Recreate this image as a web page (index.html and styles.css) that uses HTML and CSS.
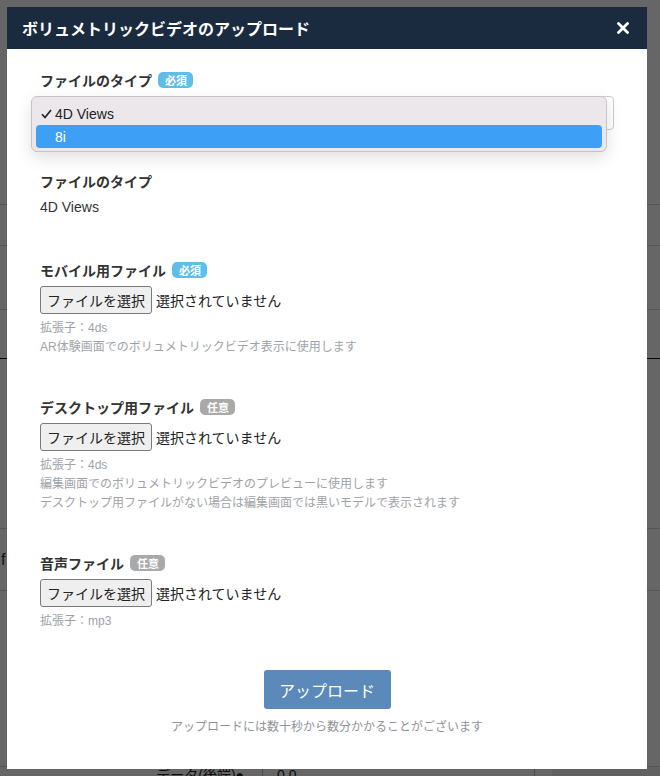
FILE: index.html
```html
<!DOCTYPE html>
<html lang="ja">
<head>
<meta charset="utf-8">
<title>ボリュメトリックビデオのアップロード</title>
<link rel="stylesheet" href="styles.css">
</head>
<body>
<div class="page">
  <div class="row r1"></div>
  <div class="row r2"></div>
  <div class="row r3"></div>
  <div class="row r4"></div>
  <div class="row r5"></div>
  <div class="row r6"><span class="cut">f</span></div>
  <div class="row r7"></div>
  <div class="row r8">
    <span class="cell-label">データ(後端)●</span>
    <span class="cell-value">0.0</span>
    <span class="cell-side"></span>
  </div>
</div>
<div class="backdrop"></div>

<div class="modal">
  <div class="modal-header">
    <h1 class="modal-title">ボリュメトリックビデオのアップロード</h1>
    <button class="close" type="button" aria-label="閉じる">
      <svg width="12" height="12" viewBox="0 0 12 12"><path d="M1.5 1.5L10.5 10.5M10.5 1.5L1.5 10.5" stroke="#fff" stroke-width="2.8" stroke-linecap="round"/></svg>
    </button>
  </div>

  <div class="modal-body">
    <div class="group g-select">
      <div class="label">ファイルのタイプ <span class="badge req">必須</span></div>
      <div class="select">
        <span class="select-value" aria-hidden="true"></span>
        <svg class="chev" width="8" height="12" viewBox="0 0 8 12"><path d="M1 4.5L4 1.5L7 4.5M1 7.5L4 10.5L7 7.5" fill="none" stroke="#222" stroke-width="1.6"/></svg>
      </div>
      <div class="popup">
        <div class="opt checked">
          <svg class="tick" width="11" height="10" viewBox="0 0 11 10"><path d="M1 5.2L4 8.5L10 1" fill="none" stroke="#222" stroke-width="1.7"/></svg>
          <span>4D Views</span>
        </div>
        <div class="opt hl"><span>8i</span></div>
      </div>
    </div>

    <div class="group g-type">
      <div class="label">ファイルのタイプ</div>
      <div class="value">4D Views</div>
    </div>

    <div class="group">
      <div class="label">モバイル用ファイル <span class="badge req">必須</span></div>
      <div class="file"><span class="file-btn">ファイルを選択</span><span class="file-name">選択されていません</span></div>
      <p class="hint">拡張子：4ds<br>AR体験画面でのボリュメトリックビデオ表示に使用します</p>
    </div>

    <div class="group">
      <div class="label">デスクトップ用ファイル <span class="badge opt-badge">任意</span></div>
      <div class="file"><span class="file-btn">ファイルを選択</span><span class="file-name">選択されていません</span></div>
      <p class="hint">拡張子：4ds<br>編集画面でのボリュメトリックビデオのプレビューに使用します<br>デスクトップ用ファイルがない場合は編集画面では黒いモデルで表示されます</p>
    </div>

    <div class="group">
      <div class="label">音声ファイル <span class="badge opt-badge">任意</span></div>
      <div class="file"><span class="file-btn">ファイルを選択</span><span class="file-name">選択されていません</span></div>
      <p class="hint">拡張子：mp3</p>
    </div>

    <div class="actions">
      <button class="upload" type="button">アップロード</button>
      <p class="note">アップロードには数十秒から数分かかることがございます</p>
    </div>
  </div>
</div>
</body>
</html>
```

FILE: styles.css
```css
* { box-sizing: border-box; }

html, body {
  margin: 0;
  padding: 0;
}

body {
  width: 660px;
  height: 776px;
  overflow: hidden;
  position: relative;
  background: #fff;
  font-family: "Liberation Sans", "Noto Sans CJK JP", sans-serif;
  color: #333;
}

/* page underneath the dialog */
.page {
  display: flex;
  flex-direction: column;
}
.row { border-bottom: 1px solid #d8d8d8; flex: none; }
.r1 { height: 205px; }
.r2 { height: 41px; }
.r3 { height: 64px; }
.r4 { height: 49px; border-bottom-color: #111; }
.r5 { height: 170px; }
.r6 { height: 62px; position: relative; }
.r7 { height: 176px; }
.r8 {
  display: flex;
  height: 40px;
  font-size: 14px;
  color: #222;
  border-bottom: 0;
}
.cut {
  display: block;
  font-size: 16px;
  padding-top: 22px;
  margin-left: 1px;
}
.cell-label {
  width: 263px;
  text-align: right;
  padding: 0 18px 0 0;
  line-height: 16px;
  border-right: 1px solid #bbb;
}
.cell-value {
  width: 272px;
  padding-left: 14px;
  line-height: 16px;
  border-right: 1px solid #bbb;
}
.cell-side { flex: 1; margin-left: 17px; background: #f2f2f2; }

.backdrop {
  position: absolute;
  inset: 0;
  background: rgba(0, 0, 0, 0.6);
}

/* dialog */
.modal {
  position: absolute;
  left: 7px;
  top: 7px;
  width: 640px;
  height: 762px;
  background: #fff;
}

.modal-header {
  height: 42px;
  background: #1b2b3f;
  display: flex;
  align-items: center;
  justify-content: space-between;
  padding: 0 15px 0 15px;
}
.modal-title {
  margin: 0;
  font-size: 16px;
  font-weight: 700;
  color: #fff;
  font-family: "Noto Sans CJK JP", sans-serif;
  letter-spacing: 0;
  line-height: 20px;
}
.close {
  border: 0;
  background: none;
  padding: 0;
  width: 12px;
  height: 12px;
  display: flex;
  margin-right: 3px;
}

.modal-body {
  padding: 21px 33px 0 33px;
  display: flex;
  flex-direction: column;
}

.group { margin-bottom: 40px; position: relative; }
.g-select { margin-bottom: 41px; }
.g-type { margin-bottom: 43px; }

.label {
  font-family: "Noto Sans CJK JP", sans-serif;
  font-size: 14px;
  font-weight: 700;
  line-height: 20px;
  color: #333;
  display: flex;
  align-items: center;
  gap: 5px;
  margin-bottom: 6px;
}

.badge {
  display: inline-block;
  font-size: 11px;
  font-weight: 700;
  color: #fff;
  line-height: 16px;
  padding: 0 6px 0 7px;
  border-radius: 5px;
  margin-left: 1px;
}
.badge.req { background: #62bde6; }
.badge.opt-badge { background: #a9a9a9; }

.value {
  font-size: 14px;
  line-height: 20px;
  color: #333;
}

/* select with its open option list */
.select {
  height: 34px;
  border: 1px solid #ccc;
  border-radius: 4px;
  display: flex;
  align-items: center;
  justify-content: space-between;
  padding: 0 7px 0 12px;
  font-size: 14px;
}
.chev { display: block; }

.popup {
  position: absolute;
  left: -9px;
  top: 26px;
  width: 576px;
  height: 56px;
  background: #ebe7eb;
  border: 1px solid #c6c3c6;
  border-radius: 6px;
  box-shadow: 0 6px 16px rgba(0, 0, 0, 0.12);
  padding: 5px 4px;
  font-family: "Liberation Sans", sans-serif;
  font-size: 14px;
  color: #222;
}
.opt {
  height: 22px;
  display: flex;
  align-items: center;
  padding-left: 5px;
  border-radius: 4px;
}
.opt.checked { margin-top: 1px; }
.tick { flex: none; margin-right: 3px; }
.opt.hl {
  background: #3d9ff6;
  color: #fff;
  height: 23px;
  padding-left: 19px;
}

/* file inputs */
.file {
  display: flex;
  align-items: center;
  gap: 4px;
  font-family: "Noto Sans CJK JP", sans-serif;
  font-size: 14px;
  color: #222;
}
.file-btn {
  display: inline-block;
  height: 28px;
  line-height: 26px;
  padding: 0 6px;
  border: 1px solid #7a7a7a;
  border-radius: 3px;
  background: #efefef;
}

.hint {
  margin: 5px 0 0;
  font-family: "Liberation Sans", "Noto Sans CJK JP", sans-serif;
  font-size: 12px;
  line-height: 19px;
  color: #9ea3a8;
}

.actions {
  display: flex;
  flex-direction: column;
  align-items: center;
  margin-top: -1px;
}
.upload {
  width: 127px;
  height: 39px;
  border: 0;
  border-radius: 3px;
  background: #5b89b9;
  color: #fff;
  font-family: "Noto Sans CJK JP", sans-serif;
  font-size: 16px;
}
.note {
  margin: 7px 0 0;
  font-family: "Noto Sans CJK JP", sans-serif;
  font-size: 12px;
  line-height: 19px;
  color: #8f9398;
}
```
